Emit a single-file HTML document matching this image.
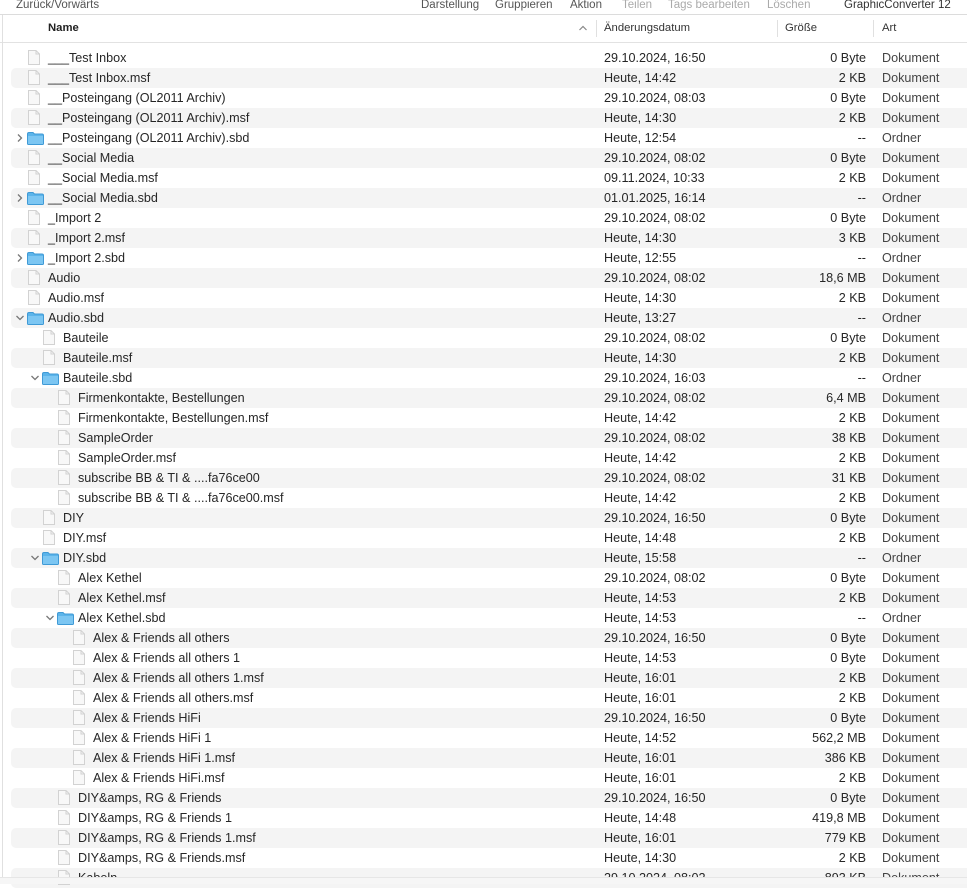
<!DOCTYPE html><html><head><meta charset="utf-8"><style>
body{margin:0;width:967px;height:883px;overflow:hidden;background:#fff;font-family:"Liberation Sans",sans-serif;font-size:12.6px;color:#262626;position:relative}
.tb{position:absolute;left:0;top:0;width:967px;height:14px;border-bottom:1px solid #dcdcdc;color:#555;font-size:11.5px}
.tb span{position:absolute;top:-1px;white-space:nowrap}
.hd{position:absolute;left:0;top:15px;width:967px;height:27px;border-bottom:1px solid #e2e2e2;font-size:11.3px;color:#333}
.hd span{position:absolute;top:7px}
.sep{position:absolute;top:5px;width:1px;height:17px;background:#e0e0e0}
.r{position:absolute;left:11px;width:956px;height:20px;border-radius:5px 0 0 5px}
.r:nth-child(even){background:#f4f4f4}
.r span{position:absolute;top:3px;white-space:nowrap}
.d{left:593px}.s{right:101px;text-align:right}.k{left:871px;color:#444}
.n{left:37px}.l1 .n{left:52px}.l2 .n{left:67px}.l3 .n{left:82px}
.r svg{position:absolute}
.fi{left:17px;top:2px}.l1 .fi{left:32px}.l2 .fi{left:47px}.l3 .fi{left:62px}
.fo{left:16px;top:4px}.l1 .fo{left:31px}.l2 .fo{left:46px}
.ch{left:4px;top:5px}.l1 .ch{left:19px}.l2 .ch{left:34px}
.bot{position:absolute;left:0;top:877px;width:967px;height:6px;background:#f6f6f6;border-top:1px solid #e6e6e6}
.lb{position:absolute;left:2px;top:15px;width:1px;height:868px;background:#e0e0e0}
</style></head><body>
<svg width="0" height="0" style="position:absolute"><defs>
<symbol id="f" viewBox="0 0 12 15"><path d="M0.5 0.5H8L11.5 4V14.5H0.5Z" fill="#f8f8f8" stroke="#d2d2d2"/><path d="M8 0.5V4H11.5" fill="none" stroke="#d2d2d2"/></symbol>
<symbol id="dir" viewBox="0 0 17 13"><path d="M0.5 2Q0.5 0.5 2 0.5H6L7.5 2H15Q16.5 2 16.5 3.5V11.5Q16.5 12.5 15.5 12.5H1.5Q0.5 12.5 0.5 11.5Z" fill="#5bb4ea" stroke="#3f9ad6"/><rect x="1" y="4" width="15" height="8" fill="#7cc6f2"/></symbol>
<symbol id="cr" viewBox="0 0 10 10"><path d="M3 1.5L6.5 5L3 8.5" fill="none" stroke="#777" stroke-width="1.3"/></symbol>
<symbol id="cd" viewBox="0 0 10 10"><path d="M1.5 3L5 6.5L8.5 3" fill="none" stroke="#777" stroke-width="1.3"/></symbol>
</defs></svg>
<div class="tb"><span style="left:16px">Zurück/Vorwärts</span><span style="left:421px">Darstellung</span><span style="left:495px">Gruppieren</span><span style="left:570px">Aktion</span><span style="left:622px;color:#aaa">Teilen</span><span style="left:668px;color:#aaa">Tags bearbeiten</span><span style="left:767px;color:#aaa">Löschen</span><span style="left:844px;color:#333">GraphicConverter 12</span></div>
<div class="hd"><span style="left:48px;font-weight:bold;color:#222">Name</span><span style="left:578px;top:8px"><svg width="10" height="8" viewBox="0 0 10 8"><path d="M1.5 6L5 2.5L8.5 6" fill="none" stroke="#888" stroke-width="1.2"/></svg></span><div class="sep" style="left:596px"></div><span style="left:604px">Änderungsdatum</span><div class="sep" style="left:777px"></div><span style="left:785px">Größe</span><div class="sep" style="left:873px"></div><span style="left:882px">Art</span></div>
<div class="lb"></div>
<div>
<div class="r" style="top:48px"><svg class="fi" width="12" height="15"><use href="#f"/></svg><span class="n">___Test Inbox</span><span class="d">29.10.2024, 16:50</span><span class="s">0 Byte</span><span class="k">Dokument</span></div>
<div class="r" style="top:68px"><svg class="fi" width="12" height="15"><use href="#f"/></svg><span class="n">___Test Inbox.msf</span><span class="d">Heute, 14:42</span><span class="s">2 KB</span><span class="k">Dokument</span></div>
<div class="r" style="top:88px"><svg class="fi" width="12" height="15"><use href="#f"/></svg><span class="n">__Posteingang (OL2011 Archiv)</span><span class="d">29.10.2024, 08:03</span><span class="s">0 Byte</span><span class="k">Dokument</span></div>
<div class="r" style="top:108px"><svg class="fi" width="12" height="15"><use href="#f"/></svg><span class="n">__Posteingang (OL2011 Archiv).msf</span><span class="d">Heute, 14:30</span><span class="s">2 KB</span><span class="k">Dokument</span></div>
<div class="r" style="top:128px"><svg class="ch" width="10" height="10"><use href="#cr"/></svg><svg class="fo" width="17" height="13"><use href="#dir"/></svg><span class="n">__Posteingang (OL2011 Archiv).sbd</span><span class="d">Heute, 12:54</span><span class="s">--</span><span class="k">Ordner</span></div>
<div class="r" style="top:148px"><svg class="fi" width="12" height="15"><use href="#f"/></svg><span class="n">__Social Media</span><span class="d">29.10.2024, 08:02</span><span class="s">0 Byte</span><span class="k">Dokument</span></div>
<div class="r" style="top:168px"><svg class="fi" width="12" height="15"><use href="#f"/></svg><span class="n">__Social Media.msf</span><span class="d">09.11.2024, 10:33</span><span class="s">2 KB</span><span class="k">Dokument</span></div>
<div class="r" style="top:188px"><svg class="ch" width="10" height="10"><use href="#cr"/></svg><svg class="fo" width="17" height="13"><use href="#dir"/></svg><span class="n">__Social Media.sbd</span><span class="d">01.01.2025, 16:14</span><span class="s">--</span><span class="k">Ordner</span></div>
<div class="r" style="top:208px"><svg class="fi" width="12" height="15"><use href="#f"/></svg><span class="n">_Import 2</span><span class="d">29.10.2024, 08:02</span><span class="s">0 Byte</span><span class="k">Dokument</span></div>
<div class="r" style="top:228px"><svg class="fi" width="12" height="15"><use href="#f"/></svg><span class="n">_Import 2.msf</span><span class="d">Heute, 14:30</span><span class="s">3 KB</span><span class="k">Dokument</span></div>
<div class="r" style="top:248px"><svg class="ch" width="10" height="10"><use href="#cr"/></svg><svg class="fo" width="17" height="13"><use href="#dir"/></svg><span class="n">_Import 2.sbd</span><span class="d">Heute, 12:55</span><span class="s">--</span><span class="k">Ordner</span></div>
<div class="r" style="top:268px"><svg class="fi" width="12" height="15"><use href="#f"/></svg><span class="n">Audio</span><span class="d">29.10.2024, 08:02</span><span class="s">18,6 MB</span><span class="k">Dokument</span></div>
<div class="r" style="top:288px"><svg class="fi" width="12" height="15"><use href="#f"/></svg><span class="n">Audio.msf</span><span class="d">Heute, 14:30</span><span class="s">2 KB</span><span class="k">Dokument</span></div>
<div class="r" style="top:308px"><svg class="ch" width="10" height="10"><use href="#cd"/></svg><svg class="fo" width="17" height="13"><use href="#dir"/></svg><span class="n">Audio.sbd</span><span class="d">Heute, 13:27</span><span class="s">--</span><span class="k">Ordner</span></div>
<div class="r l1" style="top:328px"><svg class="fi" width="12" height="15"><use href="#f"/></svg><span class="n">Bauteile</span><span class="d">29.10.2024, 08:02</span><span class="s">0 Byte</span><span class="k">Dokument</span></div>
<div class="r l1" style="top:348px"><svg class="fi" width="12" height="15"><use href="#f"/></svg><span class="n">Bauteile.msf</span><span class="d">Heute, 14:30</span><span class="s">2 KB</span><span class="k">Dokument</span></div>
<div class="r l1" style="top:368px"><svg class="ch" width="10" height="10"><use href="#cd"/></svg><svg class="fo" width="17" height="13"><use href="#dir"/></svg><span class="n">Bauteile.sbd</span><span class="d">29.10.2024, 16:03</span><span class="s">--</span><span class="k">Ordner</span></div>
<div class="r l2" style="top:388px"><svg class="fi" width="12" height="15"><use href="#f"/></svg><span class="n">Firmenkontakte, Bestellungen</span><span class="d">29.10.2024, 08:02</span><span class="s">6,4 MB</span><span class="k">Dokument</span></div>
<div class="r l2" style="top:408px"><svg class="fi" width="12" height="15"><use href="#f"/></svg><span class="n">Firmenkontakte, Bestellungen.msf</span><span class="d">Heute, 14:42</span><span class="s">2 KB</span><span class="k">Dokument</span></div>
<div class="r l2" style="top:428px"><svg class="fi" width="12" height="15"><use href="#f"/></svg><span class="n">SampleOrder</span><span class="d">29.10.2024, 08:02</span><span class="s">38 KB</span><span class="k">Dokument</span></div>
<div class="r l2" style="top:448px"><svg class="fi" width="12" height="15"><use href="#f"/></svg><span class="n">SampleOrder.msf</span><span class="d">Heute, 14:42</span><span class="s">2 KB</span><span class="k">Dokument</span></div>
<div class="r l2" style="top:468px"><svg class="fi" width="12" height="15"><use href="#f"/></svg><span class="n">subscribe BB &amp; TI &amp; ....fa76ce00</span><span class="d">29.10.2024, 08:02</span><span class="s">31 KB</span><span class="k">Dokument</span></div>
<div class="r l2" style="top:488px"><svg class="fi" width="12" height="15"><use href="#f"/></svg><span class="n">subscribe BB &amp; TI &amp; ....fa76ce00.msf</span><span class="d">Heute, 14:42</span><span class="s">2 KB</span><span class="k">Dokument</span></div>
<div class="r l1" style="top:508px"><svg class="fi" width="12" height="15"><use href="#f"/></svg><span class="n">DIY</span><span class="d">29.10.2024, 16:50</span><span class="s">0 Byte</span><span class="k">Dokument</span></div>
<div class="r l1" style="top:528px"><svg class="fi" width="12" height="15"><use href="#f"/></svg><span class="n">DIY.msf</span><span class="d">Heute, 14:48</span><span class="s">2 KB</span><span class="k">Dokument</span></div>
<div class="r l1" style="top:548px"><svg class="ch" width="10" height="10"><use href="#cd"/></svg><svg class="fo" width="17" height="13"><use href="#dir"/></svg><span class="n">DIY.sbd</span><span class="d">Heute, 15:58</span><span class="s">--</span><span class="k">Ordner</span></div>
<div class="r l2" style="top:568px"><svg class="fi" width="12" height="15"><use href="#f"/></svg><span class="n">Alex Kethel</span><span class="d">29.10.2024, 08:02</span><span class="s">0 Byte</span><span class="k">Dokument</span></div>
<div class="r l2" style="top:588px"><svg class="fi" width="12" height="15"><use href="#f"/></svg><span class="n">Alex Kethel.msf</span><span class="d">Heute, 14:53</span><span class="s">2 KB</span><span class="k">Dokument</span></div>
<div class="r l2" style="top:608px"><svg class="ch" width="10" height="10"><use href="#cd"/></svg><svg class="fo" width="17" height="13"><use href="#dir"/></svg><span class="n">Alex Kethel.sbd</span><span class="d">Heute, 14:53</span><span class="s">--</span><span class="k">Ordner</span></div>
<div class="r l3" style="top:628px"><svg class="fi" width="12" height="15"><use href="#f"/></svg><span class="n">Alex &amp; Friends all others</span><span class="d">29.10.2024, 16:50</span><span class="s">0 Byte</span><span class="k">Dokument</span></div>
<div class="r l3" style="top:648px"><svg class="fi" width="12" height="15"><use href="#f"/></svg><span class="n">Alex &amp; Friends all others 1</span><span class="d">Heute, 14:53</span><span class="s">0 Byte</span><span class="k">Dokument</span></div>
<div class="r l3" style="top:668px"><svg class="fi" width="12" height="15"><use href="#f"/></svg><span class="n">Alex &amp; Friends all others 1.msf</span><span class="d">Heute, 16:01</span><span class="s">2 KB</span><span class="k">Dokument</span></div>
<div class="r l3" style="top:688px"><svg class="fi" width="12" height="15"><use href="#f"/></svg><span class="n">Alex &amp; Friends all others.msf</span><span class="d">Heute, 16:01</span><span class="s">2 KB</span><span class="k">Dokument</span></div>
<div class="r l3" style="top:708px"><svg class="fi" width="12" height="15"><use href="#f"/></svg><span class="n">Alex &amp; Friends HiFi</span><span class="d">29.10.2024, 16:50</span><span class="s">0 Byte</span><span class="k">Dokument</span></div>
<div class="r l3" style="top:728px"><svg class="fi" width="12" height="15"><use href="#f"/></svg><span class="n">Alex &amp; Friends HiFi 1</span><span class="d">Heute, 14:52</span><span class="s">562,2 MB</span><span class="k">Dokument</span></div>
<div class="r l3" style="top:748px"><svg class="fi" width="12" height="15"><use href="#f"/></svg><span class="n">Alex &amp; Friends HiFi 1.msf</span><span class="d">Heute, 16:01</span><span class="s">386 KB</span><span class="k">Dokument</span></div>
<div class="r l3" style="top:768px"><svg class="fi" width="12" height="15"><use href="#f"/></svg><span class="n">Alex &amp; Friends HiFi.msf</span><span class="d">Heute, 16:01</span><span class="s">2 KB</span><span class="k">Dokument</span></div>
<div class="r l2" style="top:788px"><svg class="fi" width="12" height="15"><use href="#f"/></svg><span class="n">DIY&amp;amps, RG &amp; Friends</span><span class="d">29.10.2024, 16:50</span><span class="s">0 Byte</span><span class="k">Dokument</span></div>
<div class="r l2" style="top:808px"><svg class="fi" width="12" height="15"><use href="#f"/></svg><span class="n">DIY&amp;amps, RG &amp; Friends 1</span><span class="d">Heute, 14:48</span><span class="s">419,8 MB</span><span class="k">Dokument</span></div>
<div class="r l2" style="top:828px"><svg class="fi" width="12" height="15"><use href="#f"/></svg><span class="n">DIY&amp;amps, RG &amp; Friends 1.msf</span><span class="d">Heute, 16:01</span><span class="s">779 KB</span><span class="k">Dokument</span></div>
<div class="r l2" style="top:848px"><svg class="fi" width="12" height="15"><use href="#f"/></svg><span class="n">DIY&amp;amps, RG &amp; Friends.msf</span><span class="d">Heute, 14:30</span><span class="s">2 KB</span><span class="k">Dokument</span></div>
<div class="r l2" style="top:868px"><svg class="fi" width="12" height="15"><use href="#f"/></svg><span class="n">Kabeln</span><span class="d">29.10.2024, 08:02</span><span class="s">893 KB</span><span class="k">Dokument</span></div>
</div>
<div class="bot"></div>
</body></html>
